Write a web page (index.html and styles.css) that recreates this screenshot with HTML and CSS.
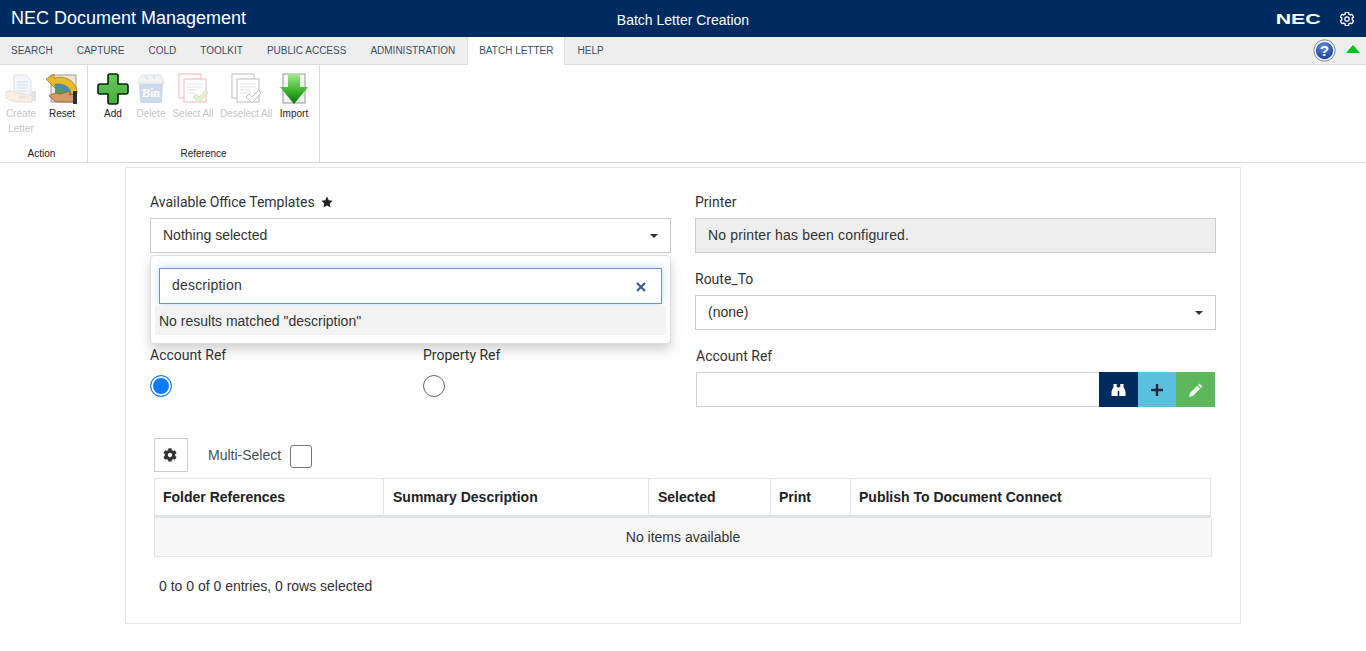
FILE: index.html
```html
<!DOCTYPE html>
<html lang="en">
<head>
<meta charset="UTF-8">
<meta name="viewport" content="width=device-width, initial-scale=1.0">
<title>Batch Letter Creation</title>
<link rel="stylesheet" href="styles.css">
</head>
<body>
<svg class="defs" width="0" height="0">
<symbol id="cog" viewBox="0 0 512 512"><path d="M487.4 315.7l-42.6-24.6c4.3-23.2 4.3-47 0-70.2l42.6-24.6c4.9-2.8 7.1-8.6 5.5-14-11.1-35.6-30-67.8-54.7-94.6-3.8-4.1-10-5.1-14.8-2.3L380.8 110c-17.9-15.4-38.5-27.3-60.8-35.1V25.8c0-5.6-3.9-10.5-9.4-11.7-36.7-8.2-74.3-7.8-109.2 0-5.5 1.2-9.4 6.1-9.4 11.7V75c-22.2 7.9-42.8 19.8-60.8 35.1L88.7 85.5c-4.9-2.8-11-1.9-14.8 2.3-24.7 26.7-43.6 58.9-54.7 94.6-1.7 5.4.6 11.2 5.5 14L67.3 221c-4.3 23.2-4.3 47 0 70.2l-42.6 24.6c-4.9 2.8-7.1 8.6-5.5 14 11.1 35.6 30 67.8 54.7 94.6 3.8 4.1 10 5.1 14.8 2.3l42.6-24.6c17.9 15.4 38.5 27.3 60.8 35.1v49.2c0 5.6 3.9 10.5 9.4 11.7 36.7 8.2 74.3 7.8 109.2 0 5.5-1.2 9.4-6.1 9.4-11.7v-49.2c22.2-7.9 42.8-19.8 60.8-35.1l42.6 24.6c4.9 2.8 11 1.9 14.8-2.3 24.7-26.7 43.6-58.9 54.7-94.6 1.5-5.5-.7-11.3-5.6-14.1zM256 336c-44.1 0-80-35.9-80-80s35.9-80 80-80 80 35.9 80 80-35.9 80-80 80z"/></symbol>
</svg>

<header class="topbar">
  <div class="app-title">NEC Document Management</div>
  <div class="page-title">Batch Letter Creation</div>
  <div class="top-right">
    <span class="nec-logo">NEC</span>
    <svg class="top-cog" width="14" height="14"><use href="#cog"/></svg>
  </div>
</header>

<nav class="tabs">
  <a class="tab">Search</a>
  <a class="tab">Capture</a>
  <a class="tab">COLD</a>
  <a class="tab">Toolkit</a>
  <a class="tab">Public Access</a>
  <a class="tab">Administration</a>
  <a class="tab active">Batch Letter</a>
  <a class="tab">Help</a>
  <div class="tabs-right">
    <svg width="24" height="24" viewBox="0 0 24 24">
      <defs><radialGradient id="helpBlue" cx="45%" cy="30%" r="75%"><stop offset="0" stop-color="#5f90e2"/><stop offset="1" stop-color="#163a96"/></radialGradient></defs>
      <circle cx="12" cy="12" r="11.200" fill="#eef1f5" stroke="#7d8696" stroke-width="1"/>
      <circle cx="12" cy="12" r="9" fill="url(#helpBlue)"/>
      <text x="12" y="17.5" class="help-mark">?</text>
    </svg>
    <span class="collapse-arrow"></span>
  </div>
</nav>

<section class="ribbon">
  <div class="ribbon-group group-action">
    <div class="tools">
      <div class="tool off w-create">
        <svg width="32" height="32" viewBox="0 0 32 32">
          <path d="M9 2h12l5 5v15H9z" fill="#dfeaf8" stroke="#9fb4d0"/>
          <path d="M12 9h11M12 12h11M12 15h11M12 18h9" stroke="#8fb0dc"/>
          <path d="M1 19c5-2 8-1 11 1l7 1c2 0 2 3 0 3h-5l8 0 5-2v7H13c-4 0-8-2-12-4z" fill="#f3d6bc" stroke="#c9a88a"/>
          <rect x="27" y="18" width="4" height="10" fill="#b9bec7"/>
        </svg>
        <span>Create Letter</span>
      </div>
      <div class="tool w-reset">
        <svg width="32" height="32" viewBox="0 0 32 32">
          <rect x="5" y="2" width="25" height="27" fill="#e9e5dc" stroke="#a39c8e"/>
          <rect x="9" y="11" width="16" height="11" fill="#3f8fc4"/>
          <path d="M9 18l5-4 5 4v4H9z" fill="#5a9a58"/>
          <path d="M0 6l8-5v4c9-2 20 0 23 13 0 2 0 3-1 5h-5c1-8-6-13-16-12v4z" fill="#e7b92e" stroke="#a98010" stroke-width=".8"/>
          <path d="M3 23c4-3 8-3 11-2l7-2c3-1 4 2 2 3l5-1v8H12c-4 0-6-4-9-6z" fill="#d59a68" stroke="#8f5d35" stroke-width=".8"/>
          <rect x="27" y="18" width="4" height="13" fill="#2a2d33"/>
        </svg>
        <span>Reset</span>
      </div>
    </div>
    <div class="group-name">Action</div>
  </div>
  <div class="ribbon-group group-ref">
    <div class="tools">
      <div class="tool w-add">
        <svg width="32" height="32" viewBox="0 0 32 32">
          <defs><linearGradient id="addGreen" x1="0" y1="0" x2="0" y2="1"><stop offset="0" stop-color="#66c95a"/><stop offset="1" stop-color="#45ad3f"/></linearGradient></defs>
          <path d="M11 3c0-1 1-2 2-2h6c1 0 2 1 2 2v8h8c1 0 2 1 2 2v6c0 1-1 2-2 2h-8v8c0 1-1 2-2 2h-6c-1 0-2-1-2-2v-8H3c-1 0-2-1-2-2v-6c0-1 1-2 2-2h8z" fill="url(#addGreen)" stroke="#06260a" stroke-width="1.6"/>
        </svg>
        <span>Add</span>
      </div>
      <div class="tool off w-delete">
        <svg width="30" height="32" viewBox="0 0 30 32">
          <path d="M3 6l3-4h18l3 4v4H3z" fill="#dfe3e8" stroke="#aab1ba"/>
          <path d="M9 3l3 4M17 2l2 4" stroke="#9aa2ac"/>
          <path d="M1 9h28v2H1z" fill="#c6ccd4"/>
          <path d="M3 11h24l-1 17c0 1-1 2-2 2H6c-1 0-2-1-2-2z" fill="#7fa3d6"/>
          <text x="15" y="24" class="bin-mark">Bin</text>
        </svg>
        <span>Delete</span>
      </div>
      <div class="tool off w-select">
        <svg width="32" height="32" viewBox="0 0 32 32">
          <rect x="2" y="1" width="22" height="24" fill="#fff" stroke="#ef6a6a" stroke-width="1.2"/>
          <rect x="7" y="6" width="22" height="23" fill="#fff" stroke="#ef6a6a" stroke-width="1.2"/>
          <path d="M10 11h16M10 14h16M10 17h10M10 20h8" stroke="#b9c6d6"/>
          <path d="M16 24l3-3 3 3 7-7 2 3-9 10z" fill="#bfe08a" stroke="#9cbf68"/>
        </svg>
        <span>Select All</span>
      </div>
      <div class="tool off w-deselect">
        <svg width="32" height="32" viewBox="0 0 32 32">
          <rect x="2" y="1" width="22" height="24" fill="#fff" stroke="#777" stroke-width="1.2"/>
          <rect x="7" y="6" width="22" height="23" fill="#fff" stroke="#777" stroke-width="1.2"/>
          <path d="M10 11h16M10 14h16M10 17h10M10 20h8" stroke="#bbb"/>
          <path d="M16 24l3-3 3 3 7-7 2 3-9 10z" fill="#fff" stroke="#666"/>
        </svg>
        <span>Deselect All</span>
      </div>
      <div class="tool w-import">
        <svg width="30" height="32" viewBox="0 0 30 32">
          <defs><linearGradient id="impGreen" x1="0" y1="0" x2="0" y2="1"><stop offset="0" stop-color="#a5e890"/><stop offset=".55" stop-color="#3cb52e"/><stop offset="1" stop-color="#0b6f0b"/></linearGradient></defs>
          <rect x="4" y="1" width="22" height="29" fill="#f4f4f4" stroke="#9a9a9a"/>
          <path d="M9 1h12v13h8L15 31 1 14h8z" fill="url(#impGreen)"/>
        </svg>
        <span>Import</span>
      </div>
    </div>
    <div class="group-name">Reference</div>
  </div>
</section>

<main class="card">
  <div class="form-cols">
    <div class="form-col left-col">
      <div class="field">
        <label class="field-label">Available Office Templates <svg class="req-star" width="12" height="12" viewBox="0 0 24 24"><path d="M12 1l3.4 7.3 7.9 1-5.8 5.5 1.5 7.9-7-3.9-7 3.9 1.5-7.9L.7 9.3l7.9-1z"/></svg></label>
        <div class="select-box">Nothing selected<span class="caret"></span></div>
      </div>
      <div class="field">
        <div class="label-gap"></div>
        <div class="select-box"></div>
      </div>
      <div class="radio-row">
        <div class="radio-col">
          <label class="field-label">Account Ref</label>
          <span class="radio checked"></span>
        </div>
        <div class="radio-col">
          <label class="field-label">Property Ref</label>
          <span class="radio"></span>
        </div>
      </div>
      <div class="dropdown">
        <div class="search-box">
          <span>description</span>
          <svg width="10" height="10" viewBox="0 0 10 10"><path d="M1 1l8 8M9 1l-8 8" stroke="#3b5f95" stroke-width="2.2"/></svg>
        </div>
        <div class="no-results">No results matched "description"</div>
      </div>
    </div>
    <div class="form-col">
      <div class="field">
        <label class="field-label">Printer</label>
        <div class="select-box readonly">No printer has been configured.</div>
      </div>
      <div class="field">
        <label class="field-label">Route_To</label>
        <div class="select-box">(none)<span class="caret"></span></div>
      </div>
      <div class="field">
        <label class="field-label indent">Account Ref</label>
        <div class="input-group">
          <div class="input-fill"></div>
          <button class="btn btn-navy">
            <svg width="15" height="14" viewBox="0 0 15 14"><path d="M2.500 1h3.200v3H6.700v9H.5V9.500c0-2 1-3.500 2-5.500zM9.300 1h3.200v3c1 2 2 3.500 2 5.500V13H8.300V4h1zM6.700 4.500h1.600V8H6.700z" fill="#fff"/></svg>
          </button>
          <button class="btn btn-info">
            <svg width="12" height="12" viewBox="0 0 12 12"><path d="M6 0v12M0 6h12" stroke="#1f2a36" stroke-width="2.4"/></svg>
          </button>
          <button class="btn btn-green">
            <svg width="16" height="16" viewBox="0 0 16 16"><path d="M11.500 1.500l3 3-1.500 1.500-3-3zM9.200 3.800l3 3-7 7L1 15l1.200-4.200z" fill="#f0fff0"/></svg>
          </button>
        </div>
      </div>
    </div>
  </div>

  <div class="grid-area">
    <div class="grid-tools">
      <button class="cog-btn"><svg width="14" height="14"><use href="#cog"/></svg></button>
      <span class="multi-label">Multi-Select</span>
      <span class="check"></span>
    </div>
    <div class="grid-head">
      <div>Folder References</div>
      <div>Summary Description</div>
      <div>Selected</div>
      <div>Print</div>
      <div>Publish To Document Connect</div>
    </div>
    <div class="grid-empty">No items available</div>
    <div class="grid-foot">0 to 0 of 0 entries, 0 rows selected</div>
  </div>
</main>
</body>
</html>
```

FILE: styles.css
```css
* {
  box-sizing: border-box;
}

body {
  margin: 0;
  font-family: "Liberation Sans", Arial, sans-serif;
  font-size: 14px;
  color: #333;
  background: #fff;
}

.defs {
  position: absolute;
}

/* top bar */
.topbar {
  height: 37px;
  background: #002b60;
  color: #fff;
  display: grid;
  grid-template-columns: 1fr auto 1fr;
  align-items: center;
  padding: 0 12px 0 12px;
}

.app-title {
  font-size: 18px;
  margin-left: -1px;
}

.page-title {
  font-size: 14px;
  padding-top: 3px;
}

.top-right {
  display: flex;
  justify-content: flex-end;
  align-items: center;
  gap: 19px;
}

.nec-logo {
  font-weight: bold;
  font-size: 15px;
  transform: scaleX(1.42);
  transform-origin: right center;
  line-height: 1;
  margin-top: -1px;
}

.top-cog {
  fill: none;
  stroke: #fff;
  stroke-width: 46px;
}

/* tabs */
.tabs {
  height: 28px;
  background: #eee;
  display: flex;
  align-items: stretch;
  border-bottom: 1px solid #ddd;
}

.tab {
  font-size: 10px;
  text-transform: uppercase;
  color: #3a5068;
  padding: 8px 12px 0;
}

.tab:first-child {
  margin-left: -1px;
}

.tab.active {
  background: #fff;
  border-left: 1px solid #ddd;
  border-right: 1px solid #ddd;
  padding: 8px 11px 0;
  height: 28px;
}

.tabs-right {
  margin-left: auto;
  display: flex;
  align-items: center;
  gap: 10px;
  padding-right: 6px;
}

.tabs-right svg {
  width: 23px;
  height: 23px;
}

.help-mark {
  font-family: "Liberation Sans", sans-serif;
  font-size: 16px;
  font-weight: bold;
  fill: #fff;
  text-anchor: middle;
}

.bin-mark {
  font-family: "Liberation Serif", serif;
  font-size: 12px;
  font-weight: bold;
  fill: #fff;
  text-anchor: middle;
}

.collapse-arrow {
  width: 0;
  height: 0;
  border-left: 7px solid transparent;
  border-right: 7px solid transparent;
  border-bottom: 8px solid #19b81c;
  margin-top: -4px;
}

/* ribbon */
.ribbon {
  height: 98px;
  display: flex;
  border-bottom: 1px solid #ddd;
}

.ribbon-group {
  border-right: 1px solid #ddd;
  height: 97px;
  display: flex;
  flex-direction: column;
}

.group-action {
  width: 88px;
}

.group-ref {
  width: 232px;
}

.tools {
  flex: 1;
  display: flex;
  padding-top: 8px;
}

.tool {
  display: flex;
  flex-direction: column;
  align-items: center;
  font-size: 10px;
  line-height: 15px;
  text-align: center;
  color: #222;
  flex: none;
}

.tool span {
  margin-top: 1px;
}

.tool.off svg {
  opacity: .4;
}

.tool.off span {
  color: #c2c6cc;
}

.w-create { width: 42px; }
.w-reset { width: 40px; }
.w-add { width: 50px; }
.w-delete { width: 26px; }
.w-select { width: 58px; }
.w-deselect { width: 48px; }
.w-import { width: 48px; }

.group-ref .tool span {
  white-space: nowrap;
}

.group-name {
  font-size: 10px;
  text-align: center;
  color: #222;
  height: 15px;
  line-height: 14px;
}

.group-action .group-name {
  padding-right: 4px;
}

/* card */
.card {
  width: 1116px;
  height: 457px;
  margin: 4px auto 0;
  border: 1px solid #e6e6e6;
  padding: 24px 24px 0;
}

.form-cols {
  display: grid;
  grid-template-columns: 521px 521px;
  gap: 24px;
}

.form-col {
  display: flex;
  flex-direction: column;
  gap: 16px;
  position: relative;
}

.field-label {
  display: block;
  font-family: Roboto, sans-serif;
  font-size: 14px;
  line-height: 20px;
  margin-bottom: 6px;
  color: #333;
}

.field-label.indent {
  margin-left: 1px;
}

.label-gap {
  height: 26px;
}

.req-star {
  fill: #222;
  margin-left: 3px;
  vertical-align: -1px;
}

.select-box {
  height: 35px;
  border: 1px solid #ccc;
  padding: 0 12px;
  line-height: 33px;
  position: relative;
  background: #fff;
}

.select-box.readonly {
  background: #eee;
  letter-spacing: .16px;
}

.caret {
  position: absolute;
  right: 12px;
  top: 15px;
  border-left: 4px solid transparent;
  border-right: 4px solid transparent;
  border-top: 4px solid #333;
}

.radio-row {
  display: flex;
  margin-top: -1px;
}

.radio-col {
  flex: none;
  width: 273px;
}

.radio-col:last-child {
  width: 248px;
}

.radio-col .field-label {
  margin-bottom: 10px;
}

.radio {
  display: block;
  width: 22px;
  height: 22px;
  border-radius: 50%;
  border: 1px solid #666;
  background: #fff;
}

.radio.checked {
  border-color: #0a7bff;
  background: #0a7bff;
  box-shadow: inset 0 0 0 2px #fff;
}

.dropdown {
  position: absolute;
  top: 63px;
  left: 0;
  width: 521px;
  height: 89px;
  background: #fff;
  border: 1px solid #ddd;
  border-radius: 4px;
  box-shadow: 0 6px 12px rgba(0, 0, 0, .18);
  padding: 12px 4px 0;
}

.search-box {
  height: 36px;
  margin: 0 4px;
  border: 1px solid #6f93c4;
  box-shadow: 0 0 8px rgba(102, 175, 233, .45);
  padding: 0 12px;
  display: flex;
  align-items: center;
  justify-content: space-between;
  color: #333;
}

.search-box span {
  margin-top: -2px;
  letter-spacing: .2px;
}

.search-box svg {
  margin-right: 3px;
  margin-top: 2px;
}

.no-results {
  margin-top: 2px;
  height: 29px;
  line-height: 30px;
  background: #f3f3f3;
  padding-left: 4px;
}

.input-group {
  display: flex;
  height: 35px;
  margin: 0 1px;
}

.input-fill {
  flex: 1;
  border: 1px solid #cdd2da;
  border-right: 0;
}

.btn {
  border: 0;
  padding: 0;
  height: 35px;
  display: flex;
  align-items: center;
  justify-content: center;
}

.btn-navy {
  width: 39px;
  background: #002b60;
}

.btn-info {
  width: 38px;
  background: #5bc0de;
}

.btn-green {
  width: 39px;
  background: #5cb85c;
}

/* grid */
.grid-area {
  margin-top: 31px;
  padding-left: 4px;
  width: 1062px;
}

.grid-tools {
  display: flex;
  align-items: center;
  height: 34px;
  margin-bottom: 6px;
}

.cog-btn {
  width: 34px;
  height: 34px;
  border: 1px solid #ccc;
  background: #fff;
  padding: 0 2px 0 0;
  display: flex;
  align-items: center;
  justify-content: center;
  fill: #333;
}

.multi-label {
  margin-left: 20px;
  color: #4a4f57;
}

.check {
  width: 22px;
  height: 23px;
  border: 1px solid #777;
  border-radius: 3px;
  margin-left: 8px;
  margin-top: 2px;
  position: relative;
  left: 1px;
}

.grid-head {
  display: grid;
  grid-template-columns: 229px 265px 122px 80px 1fr;
  height: 40px;
  border: 1px solid #e0e3e8;
  border-bottom: 3px solid #e0e3e8;
  width: 1057px;
  font-weight: bold;
  color: #222;
  line-height: 36px;
}

.grid-head div {
  padding-left: 8px;
  border-right: 1px solid #e0e3e8;
}

.grid-head div:nth-child(2),
.grid-head div:nth-child(3) {
  padding-left: 9px;
}

.grid-head div:last-child {
  border-right: 0;
}

.grid-empty {
  height: 39px;
  width: 1058px;
  background: #f7f7f7;
  border: 1px solid #e0e3e8;
  border-top: 0;
  text-align: center;
  line-height: 38px;
}

.grid-foot {
  margin-top: 19px;
  padding-left: 5px;
  line-height: 20px;
}
```
